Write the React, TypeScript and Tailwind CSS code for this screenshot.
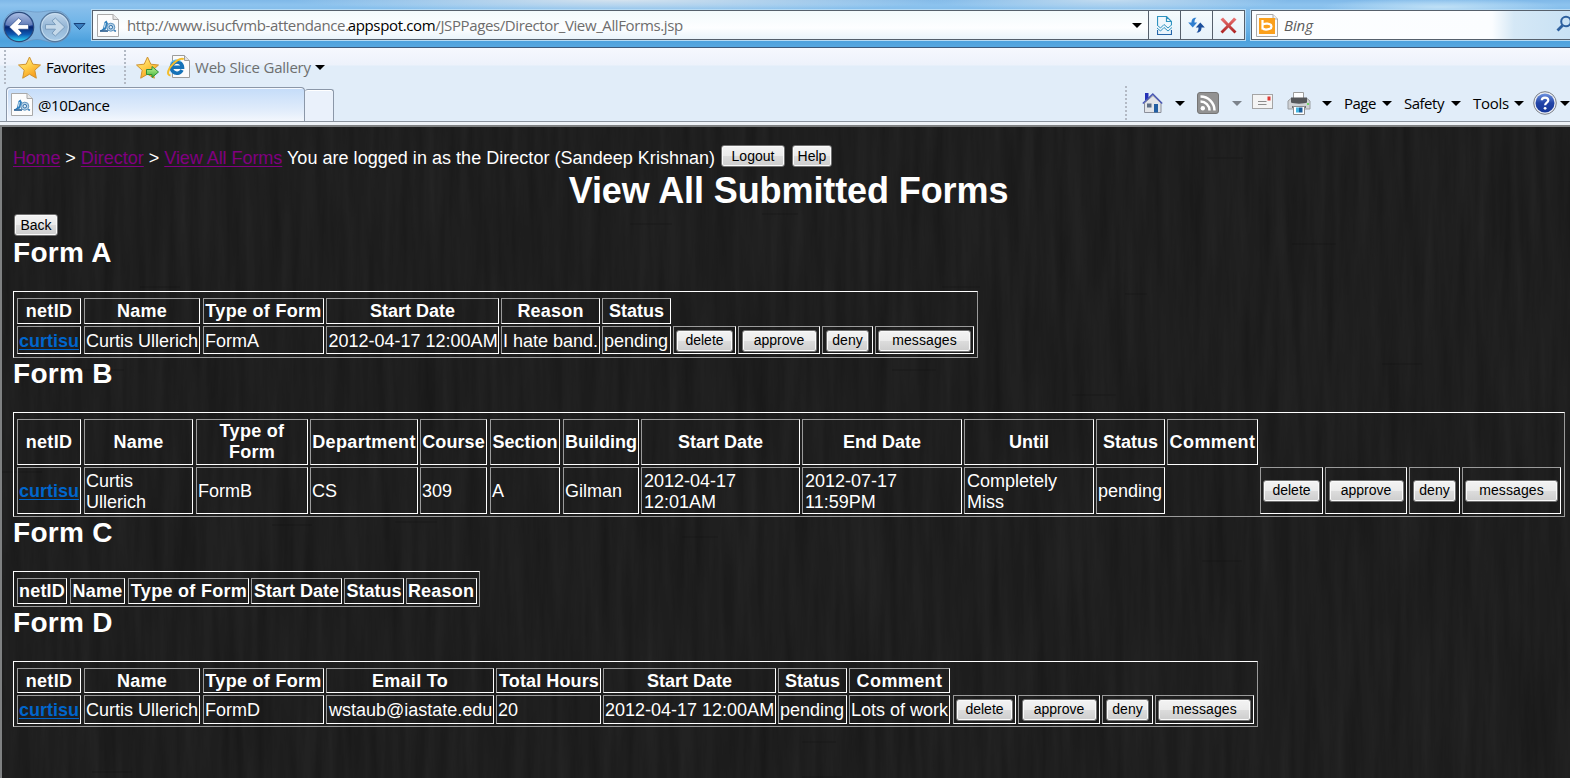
import type { ReactNode } from "react";

type Col = { label: string; box: string };
type Cell = { text?: string; link?: boolean; pad?: string };

const A: Col[] = [
  { label: "netID", box: "w-[64px] mr-[3px] tracking-[0.3px]" },
  { label: "Name", box: "w-[116px] mr-[3px] tracking-[0.2px]" },
  { label: "Type of Form", box: "w-[121px] mr-[2px] tracking-[0.3px]" },
  { label: "Start Date", box: "w-[173px] mr-[2px]" },
  { label: "Reason", box: "w-[99px] mr-[2px] tracking-[0.2px]" },
  { label: "Status", box: "w-[69px] mr-[2px]" },
];
const B: Col[] = [
  { label: "netID", box: "w-[64px] mr-[3px] tracking-[0.3px]" },
  { label: "Name", box: "w-[109px] mr-[3px] tracking-[0.2px]" },
  { label: "Type of\nForm", box: "w-[112px] mr-[2px] tracking-[0.3px]" },
  { label: "Department", box: "w-[108px] mr-[2px] tracking-[0.35px]" },
  { label: "Course", box: "w-[67px] mr-[3px] tracking-[0.1px]" },
  { label: "Section", box: "w-[70px] mr-[3px]" },
  { label: "Building", box: "w-[76px] mr-[2px]" },
  { label: "Start Date", box: "w-[159px] mr-[2px]" },
  { label: "End Date", box: "w-[160px] mr-[2px]" },
  { label: "Until", box: "w-[130px] mr-[2px]" },
  { label: "Status", box: "w-[69px] mr-[2px]" },
  { label: "Comment", box: "w-[91px] mr-[2px] tracking-[0.4px]" },
];
const C: Col[] = [
  { label: "netID", box: "w-[50px] mr-[3px] tracking-[0.2px]" },
  { label: "Name", box: "w-[55px] mr-[3px] tracking-[0.2px]" },
  { label: "Type of Form", box: "w-[121px] mr-[2px] pl-px tracking-[0.3px]" },
  { label: "Start Date", box: "w-[91px] mr-[2px]" },
  { label: "Status", box: "w-[60px] mr-[2px]" },
  { label: "Reason", box: "w-[71px] pr-px tracking-[0.2px]" },
];
const D: Col[] = [
  { label: "netID", box: "w-[64px] mr-[3px] tracking-[0.3px]" },
  { label: "Name", box: "w-[116px] mr-[3px] tracking-[0.2px]" },
  { label: "Type of Form", box: "w-[121px] mr-[2px] tracking-[0.3px]" },
  { label: "Email To", box: "w-[168px] mr-[2px] tracking-[0.3px]" },
  { label: "Total Hours", box: "w-[105px] mr-[2px] pl-px tracking-[0.1px]" },
  { label: "Start Date", box: "w-[173px] mr-[2px]" },
  { label: "Status", box: "w-[69px] mr-[2px]" },
  { label: "Comment", box: "w-[101px] mr-[3px] tracking-[0.4px]" },
];
const actions = [
  { label: "delete", box: "w-[63px] mr-[2px]", btn: "w-[57px]" },
  { label: "approve", box: "w-[82px] mr-[2px]", btn: "w-[75px]" },
  { label: "deny", box: "w-[51px] mr-[2px]", btn: "w-[43px]" },
  { label: "messages", box: "w-[99px]", btn: "w-[93px] tracking-[0.1px]" },
];

const CELL = "flex shrink-0 items-center whitespace-pre border border-t-[#9b9b9b] border-l-[#9b9b9b] border-r-white border-b-white";

function Btn({ children, className = "pb-px" }: { children: ReactNode; className?: string }) {
  return (
    <button
      className={`flex h-[22px] shrink-0 items-center justify-center rounded-[3px] border border-[#707070] bg-[linear-gradient(#f3f3f3_0%,#ebebeb_48%,#dcdcdc_50%,#cdcdcd_100%)] text-[14px] leading-[17px] text-black shadow-[inset_0_0_0_1px_#fafafa] ${className}`}
    >
      {children}
    </button>
  );
}

function FormTable({
  title,
  cols,
  row,
  width,
  r1,
  r2,
  height,
}: {
  title: string;
  cols: Col[];
  row?: Cell[];
  width: string;
  r1: string;
  r2: string;
  height: string;
}) {
  return (
    <section className="mt-px">
      <h2 className="h-[53px] text-[28px] leading-[29px] font-bold tracking-[0.3px]">{title}</h2>
      <table className={`block border border-t-white border-l-white border-r-[#9b9b9b] border-b-[#9b9b9b] pt-[6px] pl-[3px] ${width} ${height}`}>
        <tbody className="flex flex-col gap-[2px]">
          <tr className={`flex ${r1}`}>
            {cols.map((c) => (
              <th key={c.label} className={`${CELL} justify-center text-center font-bold ${c.box}`}>
                {c.label}
              </th>
            ))}
          </tr>
          {row && (
            <tr className={`flex ${r2}`}>
              {row.map((c, i) =>
                c.text ? (
                  <td key={i} className={`${CELL} ${c.text.includes("\n") ? "pt-[3px]" : "pt-px"} ${c.pad ?? "pl-[1px]"} ${cols[i].box}`}>
                    <span className="tracking-normal">
                      {c.link ? <a className="font-bold text-[#0066cc] underline decoration-1 underline-offset-2">{c.text}</a> : c.text}
                    </span>
                  </td>
                ) : (
                  <td key={i} className={`shrink-0 ${cols[i].box}`} />
                )
              )}
              {actions.map((a) => (
                <td key={a.label} className={`${CELL} justify-center ${a.box}`}>
                  <Btn className={`pb-px ${a.btn}`}>{a.label}</Btn>
                </td>
              ))}
            </tr>
          )}
        </tbody>
      </table>
    </section>
  );
}

function Tri({ className = "text-black" }: { className?: string }) {
  return (
    <svg className={`shrink-0 ${className}`} width="10" height="5" viewBox="0 0 10 5">
      <path d="M0 0H10L5 5Z" fill="currentColor" />
    </svg>
  );
}

function Dots({ className = "" }: { className?: string }) {
  return (
    <svg className={`shrink-0 ${className}`} width="2" height="35">
      <path d="M1 0V35" stroke="#b3bac5" strokeWidth="2" strokeDasharray="2 2" />
    </svg>
  );
}

function PageIcon({ className = "" }: { className?: string }) {
  return (
    <svg className={`shrink-0 ${className}`} width="22" height="23" viewBox="0 0 22 23">
      <path d="M.5 .5H16L21.500 5.500V22.500H.5Z" fill="#fcfcfc" stroke="#a9a9a9" />
      <path d="M16 .5V5.500H21.500" fill="#e6e6e6" stroke="#a9a9a9" />
      <path d="M3 17L6 14.500L7.500 8L9.500 6.500L11 9.500L9 15.500Z" fill="#2f7fbd" />
      <path d="M3 17H11" stroke="#174f86" strokeWidth="1.500" />
      <path d="M8.300 9L7.500 13.500" stroke="#e9f4fb" />
      <circle cx="13.800" cy="13.200" r="4" fill="#b9d3e8" stroke="#5e93be" />
      <circle cx="13.800" cy="13.200" r="1.800" fill="#dcebf6" stroke="#2e6fa8" />
      <path d="M17 16.500L19 17.300" stroke="#3b7cb2" strokeWidth="1.500" />
    </svg>
  );
}

const STAR = "M11.500 1L14.800 8.200L22.500 9L16.800 14.200L18.300 22.200L11.500 18.200L4.700 22.200L6.200 14.200L.5 9L8.200 8.200Z";

function Star({ arrow = false, className = "" }: { arrow?: boolean; className?: string }) {
  return (
    <svg className={`shrink-0 ${className}`} width="23" height="23" viewBox="0 0 23 23">
      <defs>
        <linearGradient id="gold" x1="0" y1="0" x2="0.6" y2="1">
          <stop offset="0" stopColor="#fff0a8" />
          <stop offset="0.5" stopColor="#ffd14c" />
          <stop offset="1" stopColor="#f79c1c" />
        </linearGradient>
        <linearGradient id="green" x1="0" y1="0" x2="0" y2="1">
          <stop offset="0" stopColor="#c4f59a" />
          <stop offset="1" stopColor="#3fb53a" />
        </linearGradient>
      </defs>
      <path d={STAR} fill="url(#gold)" stroke="#cf9330" strokeLinejoin="round" />
      {arrow && <path d="M10.500 13.500H16V10.500L22.500 16L16 21.500V18.500H10.500Z" fill="url(#green)" stroke="#2f9138" />}
    </svg>
  );
}

function IEIcon({ className = "" }: { className?: string }) {
  return (
    <svg className={`shrink-0 ${className}`} width="23" height="24" viewBox="0 0 23 24">
      <path d="M5.500 .5H17.500L22.500 5.500V22.500H5.500Z" fill="#fbfbfb" stroke="#9c9c9c" />
      <path d="M17.500 .5V5.500H22.500" fill="#e1e1e1" stroke="#9c9c9c" />
      <path d="M15 15A5.600 5.600 0 1 1 15.500 12.200H5.500" fill="none" stroke="#1572b8" strokeWidth="3.500" />
      <path d="M3.600 8.500A7 7 0 0 1 14 6.600" fill="none" stroke="#54b9ec" strokeWidth="1.300" />
      <path d="M3.500 20.500C-1 20 1 13.500 7 8C11 4.300 15.500 2.500 16.600 4.500" fill="none" stroke="#f3bd2c" strokeWidth="2" />
    </svg>
  );
}

function NavButtons() {
  return (
    <svg className="shrink-0" width="90" height="47" viewBox="0 0 90 47">
      <defs>
        <linearGradient id="back" x1="0" y1="0" x2="0" y2="1">
          <stop offset="0" stopColor="#8fa9dc" />
          <stop offset="0.45" stopColor="#23489b" />
          <stop offset="0.5" stopColor="#06246f" />
          <stop offset="0.75" stopColor="#0f5bb4" />
          <stop offset="1" stopColor="#2ee0fa" />
        </linearGradient>
        <linearGradient id="fwd" x1="0" y1="0" x2="0" y2="1">
          <stop offset="0" stopColor="#c3d8ec" />
          <stop offset="0.5" stopColor="#93b5d5" />
          <stop offset="1" stopColor="#a8cbe8" />
        </linearGradient>
      </defs>
      <path
        d="M19 10.500C29 10.500 30 12 37 12S46 10.500 55 10.500A16 16 0 0 1 55 42.500C46 42.500 44 39.500 37 39.500S29 42.500 19 42.500A16 16 0 0 1 19 10.500Z"
        fill="#8bb4da"
        fillOpacity="0.7"
        stroke="#6590bb"
        strokeOpacity="0.6"
      />
      <circle cx="19" cy="27" r="14.700" fill="url(#back)" stroke="#2b4a7c" strokeWidth="1.200" />
      <path d="M5.500 25A13.600 13.600 0 0 1 32.500 25C26 27 12 27 5.500 25Z" fill="#fff" fillOpacity="0.28" />
      <path d="M28.500 24.600V29.200H18.500L22 33.200L18.600 36L9.300 27L18.600 18L22 20.800L18.500 24.600Z" fill="#fff" stroke="#12387e" strokeWidth="0.600" />
      <circle cx="55" cy="27" r="14.700" fill="url(#fwd)" stroke="#54779c" strokeWidth="1.200" />
      <circle cx="55" cy="27" r="13.400" fill="none" stroke="#d3e5f4" strokeOpacity="0.7" />
      <path d="M45.500 24.600V29.200H55.500L52 33.200L55.400 36L64.700 27L55.400 18L52 20.800L55.500 24.600Z" fill="#c5d9ea" stroke="#7396b8" strokeWidth="0.900" />
      <path d="M74 23.500H85L79.500 29.500Z" fill="#3a7fc0" stroke="#173f77" strokeLinejoin="round" />
    </svg>
  );
}

const BARBTN = "flex w-[32px] items-center justify-center border-l border-[#56606c] bg-[linear-gradient(#f4fafd,#e6f2fa)]";

function Browser() {
  return (
    <header className="flex h-[125px] shrink-0 flex-col font-['Open_Sans','Noto_Sans',sans-serif] text-[15px]">
      <div className="flex h-[48px] items-start overflow-hidden border-b border-[#3d5a7c] bg-[radial-gradient(ellipse_330px_12px_at_620px_0px,#d5e3ef,transparent),radial-gradient(ellipse_180px_12px_at_1110px_0px,#c3dcf0,transparent),radial-gradient(ellipse_120px_9px_at_1440px_7px,#bfe0f6,transparent),linear-gradient(#7fb8e8_0px,#8dc3ee_5px,#83bdeb_10px,#66b0e6_30px,#4da1dd_41px,#55a6e0_46px)]">
        <NavButtons />
        <div className="mt-[10px] ml-[2px] flex h-[30px] w-[1153px] shrink-0 items-stretch border border-[#56606c] bg-[linear-gradient(#f3fafc,#fdfeff_60%,#eaf4fb)] shadow-[0_0_0_1px_#b5daf4]">
          <PageIcon className="mt-[3px] ml-[4px]" />
          <div className="ml-[8px] flex w-[990px] items-center pt-px text-[15px] tracking-[-0.38px] whitespace-pre text-[#6d6d6d]">
            http://www.isucfvmb-attendance.<span className="-ml-px tracking-[-0.35px] text-black">appspot.com</span>/JSPPages/Director_View_AllForms.jsp
          </div>
          <div className="flex flex-1 items-center justify-end pr-[6px]">
            <Tri />
          </div>
          <div className={BARBTN}>
            <svg width="15" height="19" viewBox="0 0 15 19" fill="none" stroke="#2f93c0">
              <path d="M.5 9V.5H9.500L14.500 5.500V9M9.500 .5V5.500H14.500" strokeWidth="1.200" />
              <path d="M0 9L3.500 12L7 8.500L11 12L15 8.500M0 12L3.500 15L7 11.500L11 15L15 11.500" />
              <path d="M.5 14V18.500H14.500V14" stroke="#2465a8" strokeWidth="1.200" />
            </svg>
          </div>
          <div className={BARBTN}>
            <svg width="17" height="16" viewBox="0 0 17 16">
              <path d="M8.500 .8C4.500 .5 3.500 3 3.500 5.500H.2L4.700 10.500L9.200 5.500H6.500C6.500 3.500 6.800 2 8.500 .8Z" fill="#2f7fd0" />
              <path d="M8.500 15.500C12.500 15.800 13.500 13 13.500 10.500H16.800L12.300 5.500L7.800 10.500H10.500C10.500 12.500 10.200 14.200 8.500 15.500Z" fill="#1c4f9c" />
            </svg>
          </div>
          <div className={BARBTN}>
            <svg width="17" height="17" viewBox="0 0 17 17">
              <defs>
                <linearGradient id="stop" x1="0" y1="0" x2="0" y2="1">
                  <stop offset="0" stopColor="#ee7676" />
                  <stop offset="1" stopColor="#a81e1e" />
                </linearGradient>
              </defs>
              <path d="M.5 2.500L3 .5L8.500 6.500L14 .5L16.500 2.500L10.500 8.500L16.500 14.500L14.500 16.500L8.500 10.500L2.500 16.500L.5 14.500L6.500 8.500Z" fill="url(#stop)" />
            </svg>
          </div>
        </div>
        <div className="mt-[10px] ml-[6px] flex h-[30px] flex-1 items-center border border-r-0 border-[#56606c] bg-[linear-gradient(90deg,#fdfeff_0px,#fbfdff_240px,#d5e8f6_262px,#c8e1f4_319px)] shadow-[0_0_0_1px_#b5daf4]">
          <svg className="ml-[4px]" width="22" height="23" viewBox="0 0 22 23">
            <path d="M.5 .5H17L21.500 5V22.500H.5Z" fill="#fcfcfc" stroke="#a9a9a9" />
            <path d="M17 .5V5H21.500" fill="#eee" stroke="#a9a9a9" />
            <rect x="3" y="4" width="16" height="16" fill="#fba01c" />
            <path d="M6.500 6V15.500M6.500 11C8 8.800 15.500 9 15.500 12.500S8 16.200 6.500 14.300" fill="none" stroke="#fff" strokeWidth="2.200" />
          </svg>
          <span className="ml-[6px] flex-1 pt-px text-[15px] tracking-[-0.1px] text-[#5c5c5c] italic">Bing</span>
          <svg className="-mr-[2px] mb-[3px] shrink-0" width="16" height="17" viewBox="0 0 16 17" fill="none" stroke="#2c5f9e" strokeWidth="2">
            <circle cx="10" cy="6.500" r="4.800" />
            <path d="M6.500 10.500L1.500 15.500" strokeWidth="2.800" />
          </svg>
        </div>
      </div>
      <div className="flex h-[74px] flex-col border-b border-[#8b939e] bg-[linear-gradient(#f6f8fe_0px,#edf2fb_17px,#e1edf9_18px,#e1edf9_100%)]">
        <div className="flex h-[39px] items-center">
          <Dots className="ml-[4px]" />
          <Star className="ml-[12px]" />
          <span className="ml-[5px] w-[78px] tracking-[-0.5px]">Favorites</span>
          <Dots />
          <Star arrow className="ml-[10px]" />
          <IEIcon className="ml-[8px]" />
          <span className="mr-[4px] ml-[5px] tracking-[-0.22px] text-[#6f6f6f]">Web Slice Gallery</span>
          <Tri />
        </div>
        <div className="flex h-[35px] items-end">
          <div className="ml-[6px] flex h-[34px] w-[299px] shrink-0 items-center rounded-t-[4px] border border-b-0 border-[#8b97a8] bg-[linear-gradient(#c4dcf9,#e2edfb_70%,#f3f7fd)] pt-px shadow-[inset_1px_1px_0_#f5f9ff]">
            <PageIcon className="mb-px ml-[4px]" />
            <span className="ml-[5px] tracking-[-0.4px]">@10Dance</span>
          </div>
          <div className="h-[32px] w-[29px] shrink-0 rounded-t-[3px] border border-b-0 border-l-0 border-[#8b97a8] bg-[#eaf1fb] shadow-[inset_0_1px_0_#fff]" />
          <div className="flex h-[36px] flex-1 items-center">
            <Dots className="ml-[791px]" />
            <svg className="ml-[15px] shrink-0" width="21" height="22" viewBox="0 0 21 22">
              <path d="M3 1H6.500V8H3Z" fill="#2432b8" />
              <path d="M2.500 11L11 3.500L19 11V20.500H2.500Z" fill="#e2e4e8" stroke="#8b8f9a" />
              <path d="M.8 11.500L10.800 2L20.200 11.500" fill="none" stroke="#4a58b4" strokeWidth="1.500" />
              <path d="M5 11.500H9.500V15.500H5Z" fill="#5d6e86" />
              <path d="M12 12H16V20.500H12Z" fill="#235fa3" />
            </svg>
            <Tri className="ml-[12px] text-black" />
            <svg className="ml-[12px] shrink-0" width="22" height="22" viewBox="0 0 22 22">
              <rect x="0.500" y="0.500" width="21" height="21" rx="2.500" fill="#929292" stroke="#757575" />
              <circle cx="5.800" cy="16.300" r="2.200" fill="#fff" />
              <path d="M3.500 9.500A9 9 0 0 1 12.500 18.500M3.500 4.500A14 14 0 0 1 17.500 18.500" fill="none" stroke="#fff" strokeWidth="2.500" />
            </svg>
            <Tri className="ml-[13px] text-[#7c838b]" />
            <svg className="mb-[3px] ml-[10px] shrink-0" width="21" height="15" viewBox="0 0 21 15">
              <rect x="0.500" y="0.500" width="20" height="14" fill="#f4f4f4" stroke="#a5a5a5" />
              <path d="M6 7.500H14.500M6 10.500H14.500" stroke="#8d8d8d" />
              <rect x="15.500" y="2.500" width="3" height="4" fill="#de3b37" />
            </svg>
            <svg className="ml-[14px] shrink-0" width="24" height="23" viewBox="0 0 24 23">
              <path d="M6.500 .5H16.500V8H6.500Z" fill="#fff" stroke="#9c9c9c" />
              <path d="M1 9L4 6.500H20L23 9V17H1Z" fill="#cfd1d4" stroke="#9a9da1" />
              <path d="M4 5.500H20V10.500C17 12 7 12 4 10.500Z" fill="#55575a" />
              <path d="M5 15H19" stroke="#6f7275" strokeWidth="2" />
              <rect x="20" y="11" width="2" height="2" fill="#74d56b" />
              <path d="M6.500 14.500H17.500V22.500H6.500Z" fill="#fff" stroke="#8c8c8c" />
              <path d="M9 15.500H12V20.500H9Z" fill="#45b5e0" />
              <path d="M12 15.500H15.500V20.500H12Z" fill="#1b5e9c" />
            </svg>
            <Tri className="ml-[11px] text-black" />
            <span className="ml-[12px] w-[38px] shrink-0 tracking-[-0.5px]">Page</span>
            <Tri />
            <span className="ml-[12px] w-[47px] shrink-0 tracking-[-0.5px]">Safety</span>
            <Tri />
            <span className="ml-[12px] w-[41px] shrink-0 tracking-[-0.3px]">Tools</span>
            <Tri />
            <svg className="ml-[9px] shrink-0" width="24" height="24" viewBox="0 0 24 24">
              <defs>
                <linearGradient id="help" x1="0" y1="0" x2="0" y2="1">
                  <stop offset="0" stopColor="#6d92e0" />
                  <stop offset="0.500" stopColor="#2143a6" />
                  <stop offset="1" stopColor="#16389a" />
                </linearGradient>
              </defs>
              <circle cx="12" cy="12" r="11.300" fill="#e9edf4" stroke="#7a7f88" />
              <circle cx="12" cy="12" r="9.500" fill="url(#help)" />
              <path d="M8.800 9.300C8.800 5.600 15.300 5.700 15.300 9.200C15.300 11.600 12.100 11.600 12.100 14.300" fill="none" stroke="#fff" strokeWidth="2.200" />
              <circle cx="12.100" cy="17.300" r="1.400" fill="#fff" />
            </svg>
            <Tri className="ml-[3px] text-black" />
          </div>
        </div>
      </div>
      <div className="h-[3px] bg-[#eef2f7]" />
    </header>
  );
}

const seams = [
  [138, 160, 40], [628, 97, 42], [760, 87, 36], [940, 160, 38], [393, 395, 42], [1123, 167, 22], [1205, 31, 36],
  [1070, 268, 44], [78, 243, 44], [890, 243, 44], [270, 398, 40], [1200, 434, 40], [400, 563, 44], [680, 410, 36],
  [800, 650, 40], [800, 615, 34], [90, 645, 40], [1290, 117, 44], [1380, 237, 40], [1475, 285, 44], [0, 345, 40],
];

function Wood() {
  return (
    <svg className="absolute inset-0 h-full w-full" aria-hidden="true">
      <filter id="grain" x="0" y="0" width="100%" height="100%" colorInterpolationFilters="sRGB">
        <feTurbulence type="fractalNoise" baseFrequency="0.09 0.006" numOctaves="4" seed="7" />
        <feColorMatrix values="0.055 0 0 0 0.091  0.055 0 0 0 0.091  0.055 0 0 0 0.091  0 0 0 0 1" />
      </filter>
      <rect width="100%" height="100%" filter="url(#grain)" />
      {seams.map(([x, y, w]) => (
        <path key={`${x}-${y}`} d={`M${x} ${y}h${w}`} stroke="#141414" strokeOpacity="0.45" />
      ))}
    </svg>
  );
}

const CRUMB = "text-[#800080] underline decoration-1 underline-offset-2";

export default function App() {
  return (
    <div className="flex h-[778px] w-[1570px] flex-col overflow-hidden bg-[#1e1e1e]">
      <Browser />
      <main className="relative flex-1 overflow-hidden border-t-2 border-l-2 border-[#7f8182] bg-[#1e1e1e] font-['Liberation_Sans',Arial,sans-serif] text-[18px] leading-[21px] text-white">
        <Wood />
        <div className="relative pl-[11px]">
          <nav className="flex h-[44px] items-start pt-[18px] whitespace-pre">
            <p className="w-[702px] pt-[3px]">
              <a className={`${CRUMB} tracking-[-0.2px]`}>Home</a>
              {" > "}
              <a className={CRUMB}>Director</a>
              {" > "}
              <a className={`${CRUMB} tracking-[-0.05px]`}>View All Forms</a>
              <span className="tracking-[0.03px]">{" You are logged in as the Director (Sandeep Krishnan)"}</span>
            </p>
            <Btn className="ml-[6px] w-[64px] pt-px">Logout</Btn>
            <Btn className="ml-[7px] w-[40px] pt-px">Help</Btn>
          </nav>
          <h1 className="-mt-px h-[44px] pr-[6px] text-center text-[36px] leading-[42px] font-bold tracking-[-0.1px]">View All Submitted Forms</h1>
          <Btn className="ml-px w-[44px] pt-px">Back</Btn>
          <div className="h-px" />
          <FormTable
            title="Form A"
            cols={A}
            width="w-[965px]"
            height="h-[67px]"
            r1="h-[26px]"
            r2="h-[28px] [&>td]:pt-[2px] [&_span]:pt-px [&_span]:block"
            row={[
              { text: "curtisu", link: true },
              { text: "Curtis Ullerich" },
              { text: "FormA" },
              { text: "2012-04-17 12:00AM", pad: "pl-[1.5px]" },
              { text: "I hate band." },
              { text: "pending" },
            ]}
          />
          <FormTable
            title="Form B"
            cols={B}
            width="w-[1552px]"
            height="h-[105px]"
            r1="h-[46px]"
            r2="h-[47px]"
            row={[
              { text: "curtisu", link: true },
              { text: "Curtis\nUllerich" },
              { text: "FormB" },
              { text: "CS" },
              { text: "309" },
              { text: "A" },
              { text: "Gilman" },
              { text: "2012-04-17\n12:01AM", pad: "pl-[2px]" },
              { text: "2012-07-17\n11:59PM", pad: "pl-[2px]" },
              { text: "Completely\nMiss", pad: "pl-[2px]" },
              { text: "pending" },
              {},
            ]}
          />
          <FormTable title="Form C" cols={C} width="w-[467px]" height="h-[36px]" r1="h-[26px]" r2="" />
          <FormTable
            title="Form D"
            cols={D}
            width="w-[1245px]"
            height="h-[66px]"
            r1="h-[25px] [&>th]:pt-px"
            r2="h-[29px]"
            row={[
              { text: "curtisu", link: true },
              { text: "Curtis Ullerich" },
              { text: "FormD" },
              { text: "wstaub@iastate.edu", pad: "pl-[2px]" },
              { text: "20", pad: "pl-[2px]" },
              { text: "2012-04-17 12:00AM" },
              { text: "pending" },
              { text: "Lots of work" },
            ]}
          />
        </div>
      </main>
    </div>
  );
}
